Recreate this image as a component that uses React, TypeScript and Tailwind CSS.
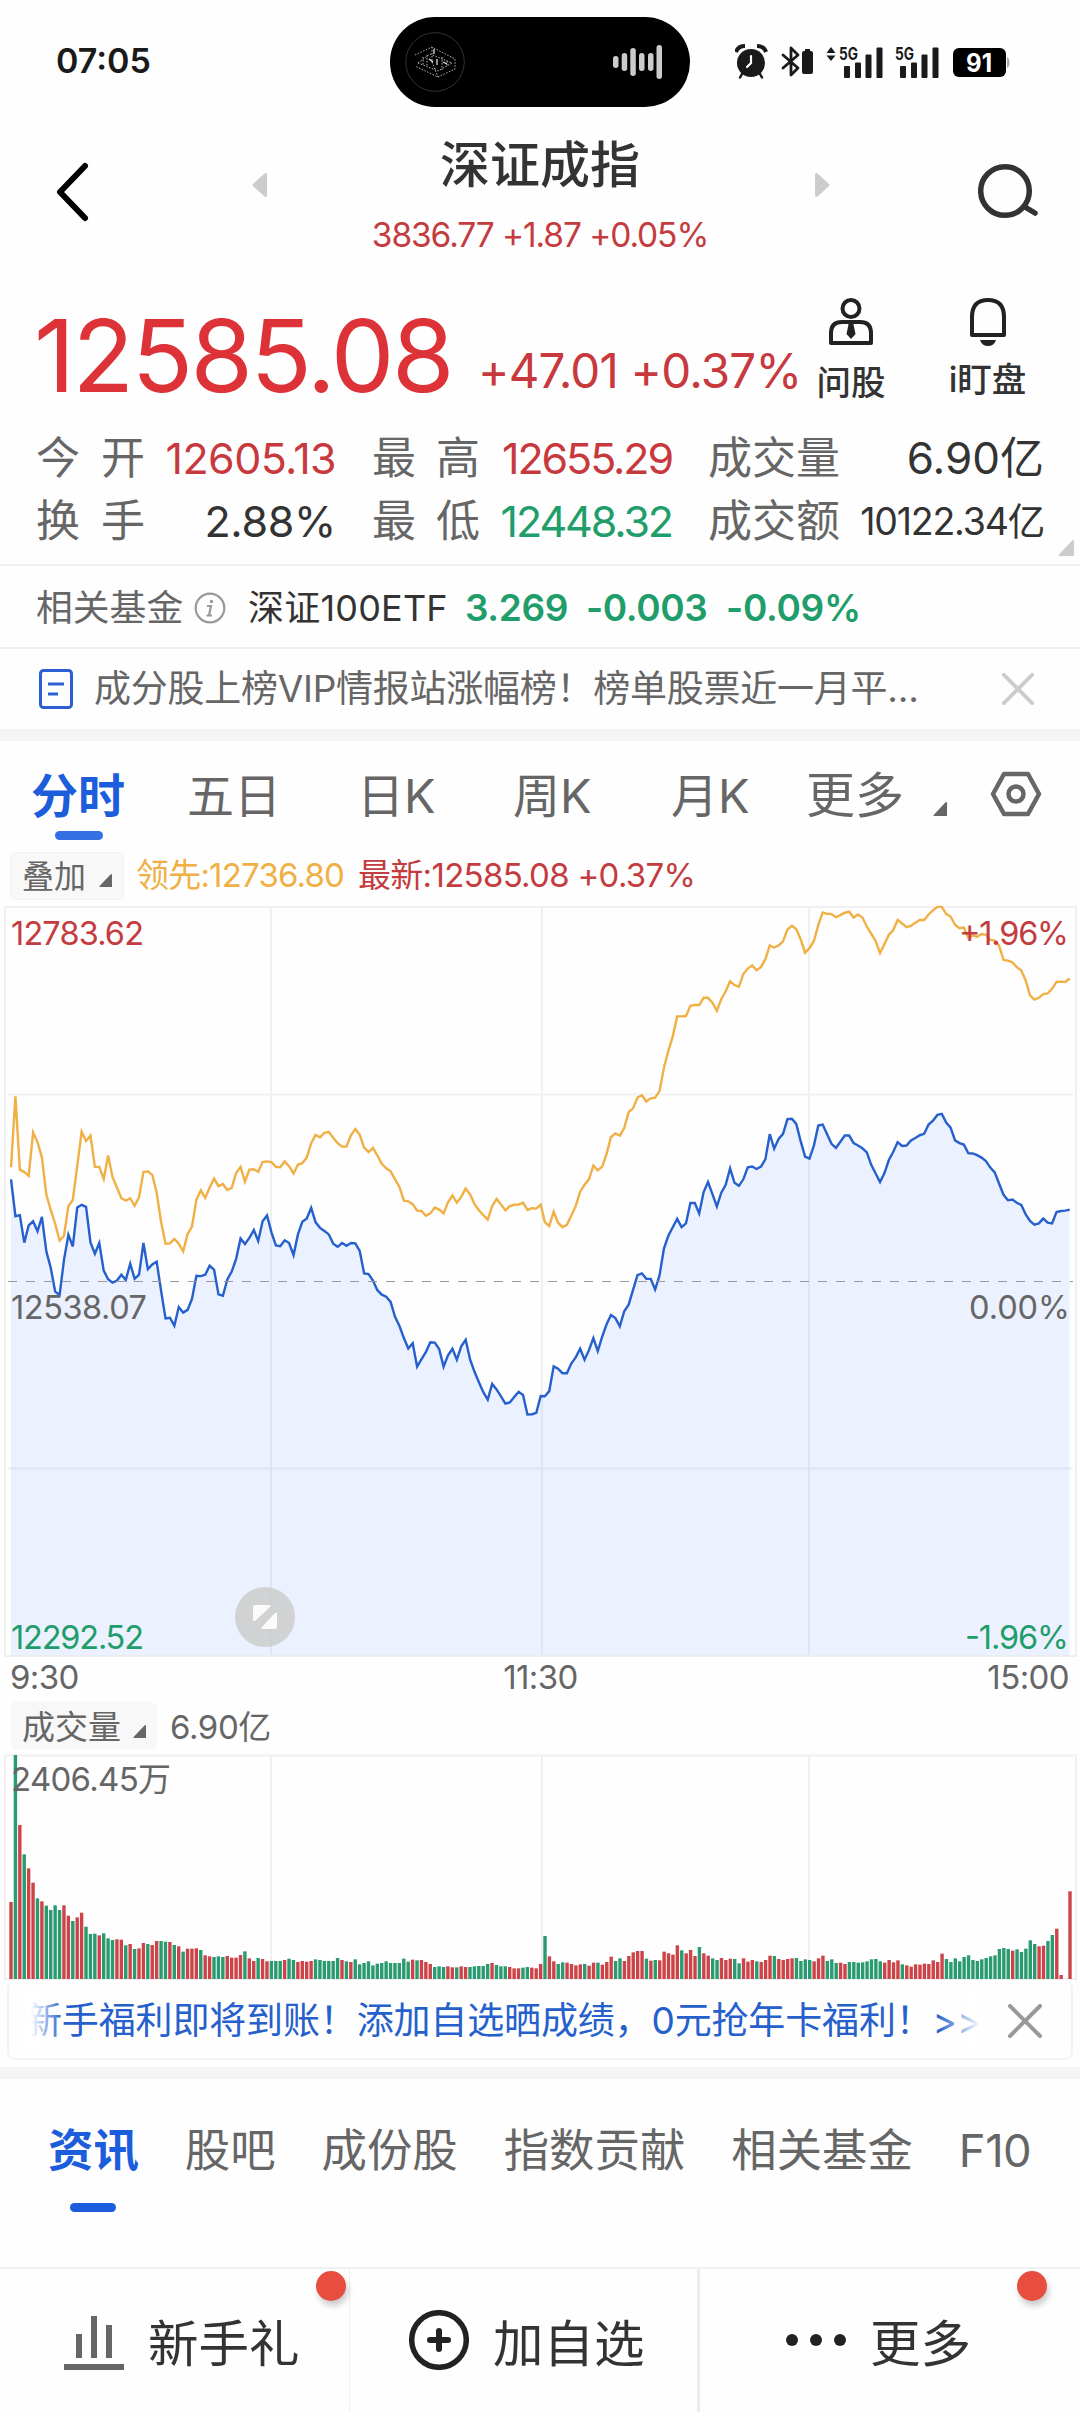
import React from 'react';
import clsx from 'clsx';

// Minute values in plot units, first to last minute of each session
const INDEX_AM = [
  811, 918, 915, 995, 945, 933, 962, 920, 1020, 1068, 1137, 1147, 1045, 972, 1006, 893, 885, 891, 994, 1027,
  996, 1076, 1101, 1111, 1105, 1088, 1103, 1056, 1100, 1088, 996, 1072, 1058, 1050, 1135, 1215, 1213, 1236, 1182, 1198,
  1190, 1158, 1091, 1092, 1088, 1062, 1073, 1145, 1149, 1102, 1079, 1042, 983, 999, 981, 958, 990, 933, 916, 965,
  1003, 1005, 988, 996, 1031, 971, 934, 925, 894, 936, 952, 961, 971, 998, 1007, 996, 1004, 996, 997, 1019,
  1084, 1086, 1105, 1133, 1146, 1152, 1167, 1210, 1237, 1272, 1302, 1287, 1355, 1333, 1312, 1284, 1285, 1304, 1355, 1322,
  1303, 1335, 1296, 1277, 1334, 1370, 1400, 1429, 1451, 1405, 1421, 1441, 1462, 1459, 1443, 1428, 1437, 1494, 1493, 1489,
  1440,
];
const INDEX_PM = [
  1441, 1426, 1354, 1361, 1374, 1374, 1346, 1328, 1303, 1335, 1307, 1272, 1310, 1268, 1232, 1205, 1214, 1238, 1194, 1175,
  1132, 1089, 1084, 1100, 1100, 1131, 1090, 1012, 975, 950, 926, 950, 939, 880, 880, 910, 848, 819, 854, 890,
  850, 827, 779, 821, 830, 811, 776, 774, 781, 774, 753, 680, 722, 694, 679, 636, 635, 650, 700, 745,
  751, 713, 655, 652, 680, 708, 720, 702, 684, 684, 706, 713, 721, 733, 769, 794, 819, 793, 755, 731,
  703, 714, 713, 698, 691, 683, 679, 652, 641, 624, 621, 646, 661, 698, 706, 710, 735, 736, 741, 748,
  758, 777, 791, 824, 856, 872, 870, 879, 885, 912, 932, 943, 939, 925, 937, 939, 906, 903, 902, 899,
];
const LEAD_AM = [
  776, 570, 783, 790, 801, 675, 703, 748, 855, 900, 940, 989, 975, 889, 871, 772, 673, 700, 684, 775,
  775, 810, 742, 805, 835, 866, 873, 866, 888, 863, 790, 788, 798, 850, 935, 998, 997, 984, 998, 1020,
  970, 948, 870, 843, 865, 835, 809, 831, 825, 842, 836, 793, 775, 818, 783, 782, 789, 761, 759, 761,
  775, 776, 759, 773, 794, 768, 764, 748, 706, 682, 689, 676, 674, 690, 706, 716, 716, 683, 665, 682,
  719, 732, 720, 742, 766, 779, 788, 811, 833, 873, 875, 883, 902, 903, 917, 910, 893, 899, 910, 878,
  858, 879, 862, 838, 855, 883, 901, 915, 928, 889, 868, 884, 901, 889, 885, 884, 879, 900, 895, 896,
  885,
];
const LEAD_PM = [
  935, 947, 905, 937, 950, 943, 916, 889, 847, 827, 811, 771, 785, 774, 737, 688, 678, 684, 662, 616,
  605, 574, 567, 585, 576, 574, 555, 487, 438, 396, 338, 338, 337, 307, 305, 305, 284, 284, 298, 322,
  288, 265, 236, 247, 252, 215, 199, 190, 204, 195, 172, 132, 138, 132, 120, 86, 75, 84, 114, 153,
  140, 119, 73, 36, 40, 41, 50, 44, 37, 34, 51, 42, 51, 77, 98, 119, 154, 128, 101, 87,
  58, 68, 79, 75, 66, 58, 58, 42, 30, 20, 20, 41, 48, 72, 82, 80, 110, 103, 107, 99,
  101, 116, 118, 133, 174, 176, 181, 195, 204, 233, 277, 289, 284, 273, 271, 258, 238, 237, 238, 228,
];

// Bar heights, negative = price went down in that minute
const VOLUME_AM = [
  231, -672, 462, -374, 332, 289, -242, 233, -220, -207, -221, -207, 221, 190, -174, 185, 199, -157, -135, -136,
  131, -137, -122, -117, 119, 118, -101, 105, -90, 92, 108, -105, 102, 114, -114, -112, 111, -102, 98, -82,
  91, 91, 92, -87, 71, 68, -66, -68, -66, 69, 64, 64, 72, -83, 62, 54, -63, 60, 53, -54,
  -54, -54, 57, -61, -57, 51, 54, 52, 54, -59, -57, -54, -54, -54, -63, 57, -53, 51, -59, -44,
  -48, -53, -41, -46, -48, -53, -48, -48, -48, -61, -52, 58, -56, 57, 51, 45, -36, -38, -36, 38,
  35, -35, 38, 36, -36, -38, -39, -39, -45, 48, -42, -38, -38, 36, 32, 32, -34, -36, 34, 32,
  45,
];
const VOLUME_PM = [
  -129, 68, 53, -45, -50, 49, 45, 41, 44, -45, 40, 49, -49, 43, 51, 67, -54, -62, 54, 69,
  80, 84, 84, -61, 55, -57, 56, 82, 77, 73, 101, -86, 77, 87, 69, -96, 77, 70, -62, -57,
  63, 57, 61, -60, -47, 62, 52, 57, -53, 51, 57, 70, -69, 60, 57, 60, 62, -63, -54, -59,
  -57, 53, 62, 70, -54, -59, -48, 49, 45, -51, -51, -49, -50, -53, -59, -60, -53, 49, 57, 50,
  56, -44, 41, 37, 44, 43, 46, 45, 56, 51, 76, -60, -51, -62, -53, -66, -71, -57, -54, -59,
  -63, -68, -71, -90, -93, -90, 85, -89, -81, -91, -116, -105, 98, 100, -114, -132, 151, 12, 0, 263,
];

const spread = (values: number[], from: number, to: number) =>
  values.map((v, i) => [from + ((to - from) * i) / (values.length - 1), v]);

const toPoints = (pts: number[][]) => pts.map(([x, y]) => `${x.toFixed(1)},${y}`).join(' ');

const indexPoints = toPoints([...spread(INDEX_AM, 32, 1570), ...spread(INDEX_PM, 1582, 3106)]);
const leadPoints = toPoints([...spread(LEAD_AM, 32, 1570), ...spread(LEAD_PM, 1582, 3106)]);
const bars = [...spread(VOLUME_AM, 11, 540.6), ...spread(VOLUME_PM, 545, 1070)];

const Corner: React.FC<{ className: string }> = ({ className }) => (
  <svg viewBox="0 0 13 13" className={className}>
    <path d="M13 0V13H1Q0 13 .6 12L11 1Q12 0 13 0Z" fill="currentColor" />
  </svg>
);

const Cross: React.FC<{ className: string }> = ({ className }) => (
  <svg viewBox="0 0 34 34" className={className} fill="none" stroke="currentColor" strokeLinecap="round">
    <path d="M2 2 32 32M32 2 2 32" />
  </svg>
);

const Signal: React.FC = () => (
  <g fill="#1a1a1a">
    <rect x="5" y="18.500" width="6" height="12" rx="1" />
    <rect x="16" y="15" width="6" height="15.500" rx="1" />
    <rect x="26.500" y="7" width="6" height="23.500" rx="1" />
    <rect x="37.500" y="0" width="6" height="30.500" rx="1" />
    <text x="0" y="12.500" fontSize="17.500" fontWeight="700" textLength="19" lengthAdjust="spacingAndGlyphs">5G</text>
  </g>
);

const StatusBar: React.FC = () => (
  <div className="flex h-[124px] pt-[17px]">
    <div className="w-[390px] pl-[56px] pt-[21px] text-[34px] leading-[46px] font-semibold text-[#1a1a1a]">07:05</div>
    <div className="flex h-[90px] w-[300px] items-center justify-between rounded-full bg-black pl-[15px] pr-[28px]">
      <svg viewBox="0 0 60 60" className="h-[60px] w-[60px]" fill="none">
        <circle cx="30" cy="30" r="29.300" stroke="#333" />
        <g stroke="#c8c8c8" strokeWidth=".9" strokeDasharray="1.500 1.500">
          <path d="M10 23 27 15 50 27V37L33 45 10 34M27 15V30L33 45" />
          <path d="M13 31 25 22 47 31 33 39ZM18 25V33M22 23V35M37 25V38M42 29V34" />
        </g>
        <path d="M29 17V22M32 27V33M24 27 28 30M38 30 42 32" stroke="#eee" strokeWidth="1.200" />
      </svg>
      <svg viewBox="0 0 50 36" className="h-[36px] w-[50px]" fill="#cbcbcb">
        <rect x="1" y="12" width="5.500" height="12" rx="2.700" />
        <rect x="9.700" y="9" width="5.500" height="18" rx="2.700" />
        <rect x="18.300" y="4" width="5.500" height="28" rx="2.700" />
        <rect x="27" y="9" width="5.500" height="18" rx="2.700" />
        <rect x="36" y="9" width="5.500" height="18" rx="2.700" />
        <rect x="44.500" y="1" width="5.500" height="34" rx="2.700" />
      </svg>
    </div>
    <svg viewBox="0 0 276 36" className="mt-[27px] ml-[45px] h-[36px] w-[276px]">
      {/* alarm */}
      <circle cx="16" cy="19" r="14" fill="#1a1a1a" />
      <path d="M1 8Q3 2 10 2M31 8Q29 2 22 2" stroke="#1a1a1a" strokeWidth="4" fill="none" />
      <path d="M7 30 5 33.500M25 30 27 33.500" stroke="#1a1a1a" strokeWidth="2.500" strokeLinecap="round" />
      <path d="M16 12V19L12 23" stroke="#fff" strokeWidth="2.200" fill="none" strokeLinecap="round" />
      {/* bluetooth and its battery */}
      <path d="M48 11 63 24 56 31V4L63 11 48 24" stroke="#1a1a1a" strokeWidth="2.800" fill="none" strokeLinejoin="round" strokeLinecap="round" />
      <path d="M70 5H75V7H76Q78 7 78 9V28Q78 30 76 30H69Q67 30 67 28V9Q67 7 69 7H70Z" fill="#1a1a1a" />
      <path d="M91.500 9 96 3 100.500 9ZM91.500 11.500H100.500L96 17Z" fill="#1a1a1a" />
      <g transform="translate(104 3.500)"><Signal /></g>
      <g transform="translate(160 3.500)"><Signal /></g>
      <rect x="218" y="4" width="53" height="29" rx="6" fill="#000" />
      <path d="M272 13Q274.500 14 274.500 18.500T272 24Z" fill="#aaa" />
      <text x="244" y="28" fontSize="25" fontWeight="700" fill="#fff" textAnchor="middle" textLength="26" lengthAdjust="spacingAndGlyphs">91</text>
    </svg>
  </div>
);

const Header: React.FC = () => (
  <div className="flex h-[156px] justify-between pr-[40px] pl-[54px]">
    <svg viewBox="0 0 38 64" className="mt-[36px] h-[64px] w-[38px]" fill="none" stroke="#000" strokeWidth="6" strokeLinecap="round" strokeLinejoin="round">
      <path d="M31 6 6 32 31 58" />
    </svg>
    <svg viewBox="0 0 15 24" className="mt-[49px] ml-[160px] h-[24px] w-[15px] text-[#ccc]">
      <path d="M15 1V23Q14 25 12 23L1 13Q0 12 1 11L12 1Q14 -1 15 1Z" fill="currentColor" />
    </svg>
    <div className="flex w-[548px] flex-col items-center pr-[2px]">
      <div className="mt-[6px] text-[50px] leading-[70px] font-medium text-[#333]">深证成指</div>
      <div className="mt-[14px] text-[33.500px] leading-[42px] tracking-[-1.1px] text-[#c43b40]">3836.77 +1.87 +0.05%</div>
    </div>
    <svg viewBox="0 0 15 24" className="mt-[49px] mr-[148px] h-[24px] w-[15px] text-[#ccc]">
      <path d="M0 1V23Q1 25 3 23L14 13Q15 12 14 11L3 1Q1 -1 0 1Z" fill="currentColor" />
    </svg>
    <svg viewBox="0 0 62 62" className="mt-[38px] h-[62px] w-[62px]" fill="none" stroke="#333" strokeWidth="5.500" strokeLinecap="round">
      <circle cx="27" cy="29" r="24.300" />
      <path d="M47 45 57 51" />
    </svg>
  </div>
);

interface Stat {
  label: string;
  value: string;
  valueClassName: string;
}

const StatColumn: React.FC<{ className: string; labelClassName: string; stats: Stat[] }> = ({ className, labelClassName, stats }) => (
  <div className={className}>
    {stats.map((s) => (
      <div key={s.label} className="flex h-[63px] items-center justify-between">
        <div className={clsx('text-[44px] leading-[63px] text-[#666]', labelClassName)}>
          {s.label.length === 2 ? s.label.split('').map((c) => <span key={c}>{c}</span>) : s.label}
        </div>
        <div className={clsx('leading-[63px] whitespace-nowrap', s.valueClassName)}>{s.value}</div>
      </div>
    ))}
  </div>
);

const Quote: React.FC = () => (
  <div className="h-[284px]">
    <div className="flex h-[147px]">
      <div className="w-[442px] pl-[34px] pt-[14px] text-[101px] leading-[122px] tracking-[-2.5px] whitespace-nowrap text-[#dd3338]">12585.08</div>
      <div className="w-[330px] pt-[60px] pl-[36px] text-[47.500px] leading-[62px] tracking-[-0.8px] whitespace-nowrap text-[#c8393e]">+47.01 +0.37%</div>
      <div className="flex w-[158px] flex-col items-center pt-[17px]">
        <svg viewBox="0 0 46 50" className="h-[50px] w-[46px]" fill="none" stroke="#222" strokeWidth="4">
          <circle cx="23" cy="11.500" r="8.500" />
          <path d="M3 46V36Q3 25 14 25H32Q43 25 43 36V46Z" strokeLinejoin="round" />
          <path d="M21 25H25L27.500 37 23 42 18.500 37Z" fill="#222" stroke="none" />
        </svg>
        <div className="mt-[13px] text-[34.500px] leading-[46px] font-medium text-[#333]">问股</div>
      </div>
      <div className="flex w-[115px] flex-col items-center pt-[17px]">
        <svg viewBox="0 0 38 50" className="h-[50px] w-[38px]" fill="none" stroke="#222" strokeWidth="4">
          <path d="M3 38V20Q3 3 19 3T35 20V38Z" strokeLinejoin="round" />
          <path d="M11 43H27Q25 49 19 49T11 43Z" fill="#222" stroke="none" />
        </svg>
        <div className="mt-[10px] text-[34.500px] leading-[46px] font-medium text-[#333]">i盯盘</div>
      </div>
    </div>
    <div className="flex pl-[36px]">
      <StatColumn
        className="w-[300px]"
        labelClassName="flex w-[109px] justify-between"
        stats={[
          { label: '今开', value: '12605.13', valueClassName: 'text-[43px] tracking-[-0.6px] text-[#c8393e]' },
          { label: '换手', value: '2.88%', valueClassName: 'text-[43px] tracking-[-0.3px] text-[#333]' },
        ]}
      />
      <StatColumn
        className="ml-[36px] w-[300px]"
        labelClassName="flex w-[108px] justify-between"
        stats={[
          { label: '最高', value: '12655.29', valueClassName: 'text-[43px] tracking-[-2.1px] text-[#c8393e]' },
          { label: '最低', value: '12448.32', valueClassName: 'text-[43px] tracking-[-2.1px] text-[#1f9d6b]' },
        ]}
      />
      <StatColumn
        className="ml-[36px] w-[336px]"
        labelClassName="whitespace-nowrap"
        stats={[
          { label: '成交量', value: '6.90亿', valueClassName: 'text-[44px] text-[#333]' },
          { label: '成交额', value: '10122.34亿', valueClassName: 'text-[37.500px] tracking-[-1.2px] text-[#333]' },
        ]}
      />
    </div>
    <div className="-mt-[13px] flex justify-end pr-[6px]">
      <Corner className="h-[16px] w-[16px] text-[#ccc]" />
    </div>
  </div>
);

const RelatedFund: React.FC = () => (
  <div className="flex h-[83px] items-center border-t-2 border-[#f0f0f0] pt-[2px] pl-[36px] whitespace-nowrap">
    <span className="w-[158px] text-[36.800px] text-[#666]">相关基金</span>
    <svg viewBox="0 0 32 32" className="h-[32px] w-[32px]" fill="none" stroke="#999">
      <circle cx="16" cy="16" r="14.300" strokeWidth="2.200" />
      <path d="M13 14H17L15 23M12.500 23.500H18" strokeWidth="2.200" />
      <circle cx="17.500" cy="9.500" r="1" strokeWidth="1.500" fill="#999" />
    </svg>
    <span className="ml-[22px] w-[217px] text-[36px] tracking-[0.2px] text-[#333]">深证100ETF</span>
    <span className="w-[121px] text-[37px] font-semibold tracking-[-0.4px] text-[#1f9d6b]">3.269</span>
    <span className="w-[140px] text-[37px] font-semibold tracking-[-0.4px] text-[#1f9d6b]">-0.003</span>
    <span className="text-[37px] font-semibold tracking-[-0.3px] text-[#1f9d6b]">-0.09%</span>
  </div>
);

const Notice: React.FC = () => (
  <div className="flex h-[82px] items-center border-t-2 border-[#f0f0f0] pr-[46px] pl-[39px]">
    <svg viewBox="0 0 34 40" className="h-[40px] w-[34px]" fill="none" stroke="#2a60d4" strokeWidth="3">
      <rect x="1.500" y="1.500" width="31" height="37" rx="3" />
      <path d="M9 15H25M9 25H19" strokeWidth="3.200" />
    </svg>
    <span className="ml-[21px] flex-1 text-[37px] tracking-[-0.25px] whitespace-nowrap text-[#666]">成分股上榜VIP情报站涨幅榜！榜单股票近一月平...</span>
    <Cross className="h-[32px] w-[32px] stroke-[4] text-[#ccc]" />
  </div>
);

const PeriodTabs: React.FC = () => (
  <div className="flex h-[107px] pt-[21px] pl-[31px] text-[47px] leading-[68px] whitespace-nowrap text-[#666]">
    <div className="flex w-[156px] flex-col">
      <span className="font-bold text-[#1c5ddc]">分时</span>
      <span className="ml-[24px] mt-[1px] h-[9px] w-[48px] rounded-full bg-[#3470e4]" />
    </div>
    <span className="w-[170px]">五日</span>
    <span className="w-[156px]">日K</span>
    <span className="w-[158px]">周K</span>
    <span className="w-[135px]">月K</span>
    <span className="w-[127px] text-[49px]">更多</span>
    <Corner className="mt-[40px] h-[14px] w-[14px] text-[#666]" />
    <svg viewBox="0 0 52 46" className="mt-[9px] ml-[43px] h-[46px] w-[52px]" fill="none" stroke="#666" strokeWidth="4.500" strokeLinejoin="round">
      <path d="M14 3H38L49 23 38 43H14L3 23Z" />
      <circle cx="26" cy="23" r="7.500" />
    </svg>
  </div>
);

const Legend: React.FC = () => (
  <div className="flex h-[52px] items-center pt-[4px] pl-[10px] text-[33px] whitespace-nowrap">
    <div className="flex h-[48px] w-[114px] items-center rounded-md border border-[#f2f2f2] bg-[#f8f8f8] pt-[2px] pl-[11px] text-[32px] text-[#666]">
      叠加
      <Corner className="mt-[6px] ml-[13px] h-[13px] w-[13px]" />
    </div>
    <span className="ml-[12px] w-[222px] tracking-[-0.8px] text-[#f0b045]">领先:12736.80</span>
    <span className="tracking-[-0.7px] text-[#c43b40]">最新:12585.08 +0.37%</span>
  </div>
);

const PriceChart: React.FC = () => (
  <svg viewBox="0 0 1080 760" className="h-[760px] w-[1080px]">
    <g stroke="#f0f0f0" strokeWidth="2" fill="none">
      <rect x="5" y="7" width="1071" height="749" />
      <path d="M271 7V756M542 7V756M809 7V756M8 194.500H1073M8 568.500H1073" />
    </g>
    <g transform="scale(.3444)" fill="none" strokeWidth="7">
      <polygon points={`32,2193 ${indexPoints} 3106,2193`} fill="#3478ff" fillOpacity=".095" />
      <polyline points={leadPoints} stroke="#f0b045" />
      <polyline points={indexPoints} stroke="#2560cc" />
    </g>
    <path d="M8 381.500H1073" stroke="#999" strokeWidth="1.200" strokeDasharray="9 9" />
    <g fontSize="32.500">
      <text x="11" y="44.500" fill="#c43b40" textLength="133">12783.62</text>
      <text x="1069" y="44.500" fill="#c43b40" textAnchor="end" textLength="110">+1.96%</text>
      <text x="11" y="418.500" fill="#666" textLength="136">12538.07</text>
      <text x="1070" y="418.500" fill="#666" textAnchor="end" textLength="101">0.00%</text>
      <text x="11" y="748.500" fill="#1f9d6b" textLength="133">12292.52</text>
      <text x="1069" y="748.500" fill="#1f9d6b" textAnchor="end" textLength="104">-1.96%</text>
    </g>
    <circle cx="265" cy="717" r="30" fill="#ccc" fillOpacity=".85" />
    <path d="M255 705H269Q272 705 270 707L255 721Q253 722 253 720V707Q253 705 255 705ZM275 729H263Q260 729 262 727L275 713Q277 712 277 714V727Q277 729 275 729Z" fill="#fff" fillOpacity=".9" />
  </svg>
);

const VolumeChart: React.FC = () => (
  <svg viewBox="0 0 1080 230" className="h-[230px] w-[1080px]">
    <path d="M5 229V5.500H1076V229M271 5V229M542 5V229M809 5V229M4 229H1077" stroke="#f0f0f0" strokeWidth="2" fill="none" />
    {bars.map(([x, v], i) => (
      <rect key={i} x={x - 1.700} y={229 - Math.abs(v) / 3} width="3.400" height={Math.abs(v) / 3} fill={v < 0 ? '#2a9a70' : '#cc4448'} />
    ))}
    <text x="11" y="40.500" fontSize="33" fill="#666" textLength="160">2406.45万</text>
  </svg>
);

const Promo: React.FC = () => (
  <div className="mx-[7px] flex h-[80px] items-center rounded-lg border-2 border-t-0 border-[#f3f3f3] pt-[4px] pr-[29px] pl-[16px]">
    <div className="relative text-[37px] leading-[60px] tracking-[-0.15px] whitespace-nowrap text-[#2560cc]">
      <span>新手福利即将到账！添加自选晒成绩，0元抢年卡福利！&gt;&gt;</span>
      <div className="absolute inset-y-0 left-0 w-[38px] bg-linear-to-r from-white from-15% to-transparent" />
      <div className="absolute inset-y-0 right-0 w-[44px] bg-linear-to-l from-white to-transparent" />
    </div>
    <Cross className="ml-auto h-[34px] w-[34px] shrink-0 stroke-[4] text-[#999]" />
  </div>
);

const InfoTabs: React.FC = () => (
  <div className="flex h-[188px] gap-[46px] pt-[40px] pl-[48px] text-[45.400px] leading-[64px] whitespace-nowrap text-[#666]">
    <div className="flex flex-col">
      <span className="font-bold text-[#1c5ddc]">资讯</span>
      <span className="mt-[20px] ml-[22px] h-[9px] w-[46px] rounded-full bg-[#1c5ddc]" />
    </div>
    <span>股吧</span>
    <span>成份股</span>
    <span>指数贡献</span>
    <span>相关基金</span>
    <span className="tracking-[-0.5px]">F10</span>
  </div>
);

const Badge: React.FC<{ className: string }> = ({ className }) => (
  <span className={clsx('absolute top-[2px] h-[30px] w-[30px] rounded-full bg-[#e84e40] shadow-[2px_5px_6px_rgba(0,0,0,0.2)]', className)} />
);

const BottomBar: React.FC = () => (
  <div className="flex h-[145px] border-t-2 border-[#f0f0f0] text-[50.500px] leading-[72px] whitespace-nowrap text-[#333]">
    <div className="relative flex w-[350px] border-r border-[#f0f0f0] pt-[39px] pl-[64px]">
      <svg viewBox="0 0 60 54" className="mt-[8px] h-[54px] w-[60px]" fill="#666">
        <path d="M12 18H18V42H12ZM27 0H33V42H27ZM42 9H48V42H42ZM0 48H60V54H0Z" />
      </svg>
      <span className="ml-[24px]">新手礼</span>
      <Badge className="right-[3px]" />
    </div>
    <div className="flex w-[350px] border-r-3 border-[#ececec] pt-[39px] pl-[59px]">
      <svg viewBox="0 0 60 60" className="mt-[2px] h-[60px] w-[60px]" fill="none" stroke="#222" strokeLinecap="round">
        <circle cx="30" cy="30" r="27.300" strokeWidth="5.500" />
        <path d="M30 21V39M21 30H39" strokeWidth="6" />
      </svg>
      <span className="ml-[24px]">加自选</span>
    </div>
    <div className="relative flex w-[380px] pt-[39px] pl-[86px]">
      <svg viewBox="0 0 60 12" className="mt-[26px] h-[12px] w-[60px]" fill="#222">
        <circle cx="6" cy="6" r="6" />
        <circle cx="30" cy="6" r="6" />
        <circle cx="54" cy="6" r="6" />
      </svg>
      <span className="ml-[24px]">更多</span>
      <Badge className="right-[33px]" />
    </div>
  </div>
);

const App: React.FC = () => {
  return (
    <div className="flex h-[2412px] w-[1080px] flex-col overflow-hidden bg-[#fefefe] font-['Inter','Noto_Sans_CJK_SC',sans-serif]">
      <StatusBar />
      <Header />
      <Quote />
      <RelatedFund />
      <Notice />
      <div className="h-[12px] bg-[#f4f4f4]" />
      <PeriodTabs />
      <Legend />
      <PriceChart />
      <div className="flex h-[42px] items-center justify-between pr-[11px] pb-[6px] pl-[10px] text-[33px] tracking-[-0.6px] text-[#666]">
        <span className="w-[100px]">9:30</span>
        <span className="pl-[2px]">11:30</span>
        <span className="w-[100px] text-right">15:00</span>
      </div>
      <div className="flex h-[48px] items-center pl-[10px] text-[33px] text-[#666]">
        <div className="flex h-[48px] w-[147px] items-center rounded-md bg-[#f8f8f8] pt-[4px] pl-[12px]">
          成交量
          <Corner className="mt-[6px] ml-[12px] h-[13px] w-[13px]" />
        </div>
        <span className="ml-[13px] pt-[4px] tracking-[-0.4px]">6.90亿</span>
      </div>
      <VolumeChart />
      <Promo />
      <div className="mt-[7px] h-[12px] bg-[#f4f4f4]" />
      <InfoTabs />
      <BottomBar />
    </div>
  );
};

export default App;
